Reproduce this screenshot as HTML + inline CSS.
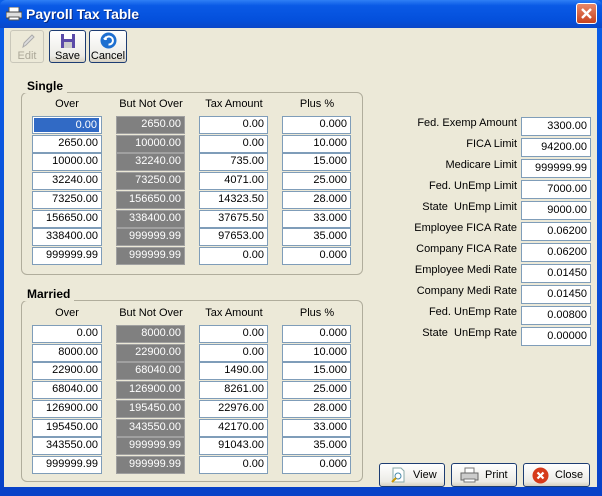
<!DOCTYPE html>
<html><head><style>
*{box-sizing:border-box;margin:0;padding:0}
body{width:602px;height:496px;overflow:hidden;background:#0a3fd0;font-family:"Liberation Sans",sans-serif;font-size:11px;position:relative}
.win{position:absolute;left:0;top:0;width:602px;height:496px;background:linear-gradient(#0a5ee8,#0842c8)}
.title{position:absolute;left:0;top:0;width:602px;height:28px;background:linear-gradient(#2f7ff5 0%,#0a5ae6 20%,#0450dc 70%,#0b47c8 100%);border-radius:6px 6px 0 0}
.title span{position:absolute;left:26px;top:6px;color:#fff;font-weight:bold;font-size:14px;text-shadow:1px 1px #0a2a80}
.client{position:absolute;left:4px;top:28px;width:593px;height:459px;background:#ece9d8}
.a{position:absolute}
.tb{position:absolute;top:30px;height:33px;border:1px solid #1c3c72;border-radius:3px;background:linear-gradient(#fff,#ecebe6 80%,#d6d0c0);text-align:center;font-size:11px;padding-top:19px}
.lbl{position:absolute;font-size:11px;color:#000}
.f{position:absolute;height:18px;border:1px solid #7f9db9;background:#fff;text-align:right;padding-right:3px;font-size:11px;line-height:15px}
.g{background:#808080;color:#fff;border:1px solid #a0a0a0}
.sel{background:#fff}
.sel i{position:absolute;left:1px;top:1px;right:2px;bottom:1px;background:#316ac5;color:#fff;font-style:normal;text-align:right;padding-right:2px;line-height:14px}
.box{position:absolute;border:1px solid #b0ad9c;border-radius:6px}
.gt{position:absolute;font-weight:bold;font-size:12px;background:#ece9d8;padding:0 4px}
.bb{position:absolute;top:463px;height:24px;border:1px solid #1c3c72;border-radius:3px;background:linear-gradient(#fff,#ecebe6 80%,#d6d0c0);font-size:11px;line-height:22px}
</style></head><body>
<div class="win"></div>
<div class="title"><svg class="a" style="left:6px;top:7px" width="16" height="14"><rect x="3" y="0" width="10" height="5" fill="#fff" stroke="#555"/><rect x="0" y="5" width="16" height="6" fill="#ddd" stroke="#444"/><rect x="3" y="10" width="10" height="3" fill="#fff" stroke="#555"/></svg><span>Payroll Tax Table</span>
<div class="a" style="left:576px;top:3px;width:21px;height:21px;border:1px solid #fff;border-radius:3px;background:linear-gradient(#e8886a,#c8421e)"><svg width="19" height="19"><path d="M5 5L14 14M14 5L5 14" stroke="#fff" stroke-width="2.4"/></svg></div></div>
<div class="client"></div>
<div class="tb" style="left:10px;width:34px;border-color:#c9c7ba;color:#aca899;background:#ece9d8">Edit<svg class="a" style="left:9px;top:2px" width="16" height="16"><path d="M3 14L4 10L12 2L14 4L6 12Z" fill="#ddd" stroke="#aaa"/></svg></div>
<div class="tb" style="left:49px;width:37px">Save<svg class="a" style="left:10px;top:2px" width="16" height="16"><rect x="1" y="1" width="14" height="14" fill="#5a4aa8"/><rect x="4" y="1" width="8" height="5" fill="#fff"/><rect x="4" y="9" width="8" height="6" fill="#ccc"/></svg></div>
<div class="tb" style="left:89px;width:38px">Cancel<svg class="a" style="left:10px;top:1px" width="17" height="17"><circle cx="8.5" cy="8.5" r="8" fill="#1e6fd0"/><path d="M5 8A4 4 0 1 1 8.5 12.5" stroke="#fff" stroke-width="2" fill="none"/><path d="M3 7L6 4L7 8Z" fill="#fff"/></svg></div>

<div class="box" style="left:21px;top:92px;width:342px;height:183px"></div>
<div class="gt" style="left:23px;top:79px">Single</div>
<div class="box" style="left:21px;top:300px;width:342px;height:182px"></div>
<div class="gt" style="left:23px;top:287px">Married</div>

<div id="grids"></div>

<div id="right"></div>

<div class="bb" style="left:379px;width:66px;padding-left:33px">View<svg class="a" style="left:10px;top:3px" width="16" height="17"><path d="M3 1H11L14 4V15H3Z" fill="#fff" stroke="#8aa"/><circle cx="8" cy="9" r="3" fill="none" stroke="#48a"/><path d="M6 11L2 15" stroke="#c90" stroke-width="2"/></svg></div>
<div class="bb" style="left:451px;width:66px;padding-left:33px">Print<svg class="a" style="left:8px;top:3px" width="20" height="17"><rect x="5" y="1" width="9" height="6" fill="#fff" stroke="#777"/><rect x="1" y="6" width="17" height="7" fill="#ccc" stroke="#666"/><rect x="4" y="12" width="11" height="3" fill="#fff" stroke="#777"/></svg></div>
<div class="bb" style="left:523px;width:67px;padding-left:31px">Close<svg class="a" style="left:8px;top:3px" width="17" height="17"><circle cx="8.5" cy="8.5" r="8" fill="#d63a1a"/><path d="M5.5 5.5L11.5 11.5M11.5 5.5L5.5 11.5" stroke="#fff" stroke-width="2.2"/></svg></div>

<script>
var S=[["0.00","2650.00","0.00","0.000"],["2650.00","10000.00","0.00","10.000"],["10000.00","32240.00","735.00","15.000"],["32240.00","73250.00","4071.00","25.000"],["73250.00","156650.00","14323.50","28.000"],["156650.00","338400.00","37675.50","33.000"],["338400.00","999999.99","97653.00","35.000"],["999999.99","999999.99","0.00","0.000"]];
var M=[["0.00","8000.00","0.00","0.000"],["8000.00","22900.00","0.00","10.000"],["22900.00","68040.00","1490.00","15.000"],["68040.00","126900.00","8261.00","25.000"],["126900.00","195450.00","22976.00","28.000"],["195450.00","343550.00","42170.00","33.000"],["343550.00","999999.99","91043.00","35.000"],["999999.99","999999.99","0.00","0.000"]];
var xs=[32,116,199,282],hd=["Over","But Not Over","Tax Amount","Plus %"],h="";
function grid(d,top,sel){for(var c=0;c<4;c++)h+='<div class="lbl" style="left:'+xs[c]+'px;width:70px;text-align:center;top:'+(top-18)+'px">'+hd[c]+'</div>';
for(var r=0;r<8;r++){var y=Math.round(top+r*18.7);for(var c=0;c<4;c++){var cl="f"+(c==1?" g":"");if(sel&&r==0&&c==0)h+='<div class="f sel" style="left:32px;top:'+y+'px;width:70px"><i>'+d[r][c]+'</i></div>';else h+='<div class="'+cl+'" style="left:'+xs[c]+'px;top:'+y+'px;width:'+(c==0?70:69)+'px">'+d[r][c]+'</div>';}}}
grid(S,116,1);grid(M,325,0);document.getElementById("grids").innerHTML=h;
var R=[["Fed. Exemp Amount","3300.00"],["FICA Limit","94200.00"],["Medicare Limit","999999.99"],["Fed. UnEmp Limit","7000.00"],["State  UnEmp Limit","9000.00"],["Employee FICA Rate","0.06200"],["Company FICA Rate","0.06200"],["Employee Medi Rate","0.01450"],["Company Medi Rate","0.01450"],["Fed. UnEmp Rate","0.00800"],["State  UnEmp Rate","0.00000"]];h="";
for(var i=0;i<11;i++){var y=117+i*21;h+='<div class="lbl" style="left:380px;width:137px;text-align:right;top:'+(y)+'px;white-space:pre">'+R[i][0]+'</div><div class="f" style="left:521px;top:'+y+'px;width:70px;height:19px;line-height:16px">'+R[i][1]+'</div>';}
document.getElementById("right").innerHTML=h;
</script>
</body></html>
